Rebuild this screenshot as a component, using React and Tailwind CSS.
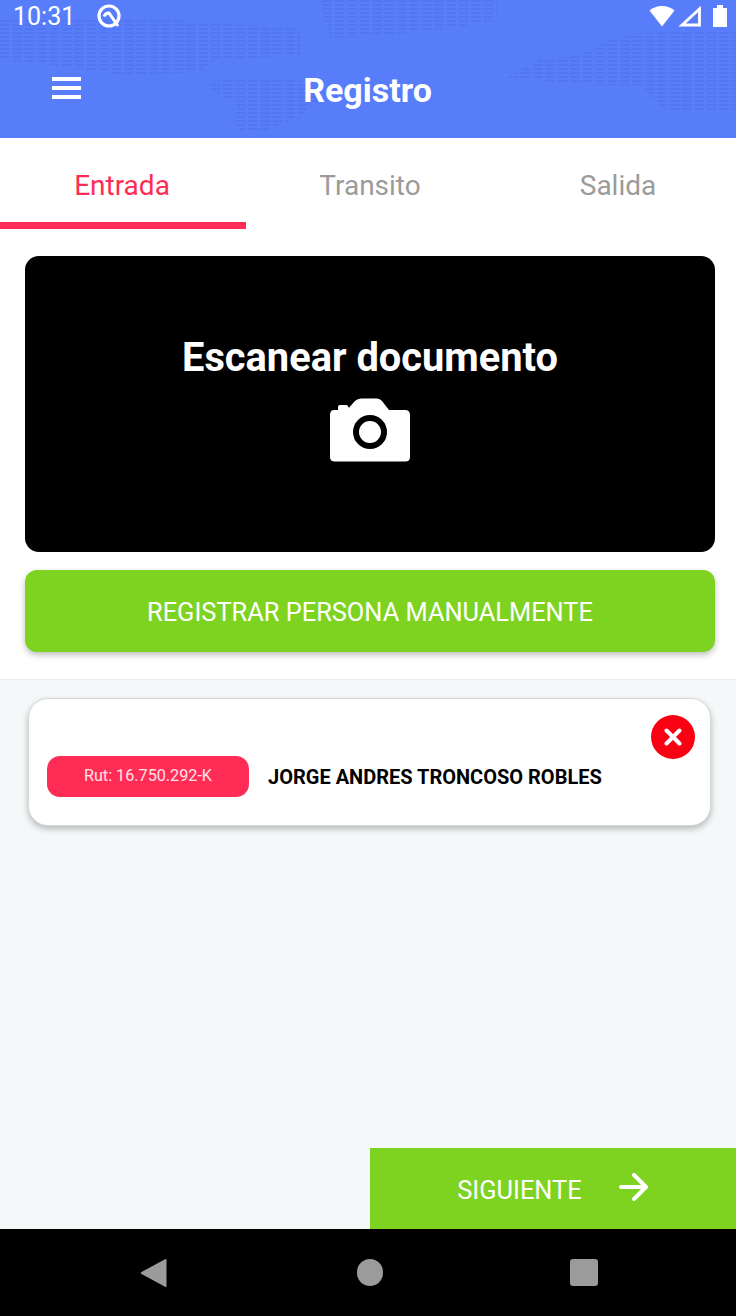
import React from "react";

const mapBlobs = [
  "M0 18 L140 18 L230 24 L300 28 L300 55 L215 60 L200 72 L125 75 L30 62 L0 60 Z",
  "M203 87 L227 78 L300 80 L327 93 L300 117 L267 130 L240 130 L230 120 L240 107 L217 93 Z",
  "M320 0 L497 0 L497 20 L450 28 L385 35 L330 38 Z",
  "M505 78 L540 60 L580 55 L610 40 L640 33 L736 30 L736 110 L665 110 L640 85 L600 85 Z",
];

function StatusBar() {
  return (
    <div className="relative flex h-[36px] items-center justify-between pb-[3px] pl-[13px] pr-[8px] text-white">
      <div className="flex items-center gap-[21px]">
        <span className="text-[25px] leading-none font-normal">10:31</span>
        <svg width="26" height="26" viewBox="0 0 26 26" fill="none" stroke="white" strokeWidth="3.2" className="-mt-[1px]">
          <circle cx="13" cy="13" r="10" />
          <path d="M8 13.5 Q9.5 10 13 10 L22 23" strokeWidth="3" />
        </svg>
      </div>
      <div className="mb-[2px] flex items-center">
        <svg width="26" height="22" viewBox="0 0 26 22" fill="white">
          <path d="M13 21.5 L0.5 5.5 C4 2.5 8 1 13 1 C18 1 22 2.5 25.5 5.5 Z" />
        </svg>
        <svg width="24" height="22" viewBox="0 0 24 22" fill="none" stroke="white" strokeWidth="2.8" className="ml-[3px]">
          <path d="M21.5 4 L21.5 20 L4 20 Z" />
        </svg>
        <svg width="16" height="23" viewBox="0 0 16 23" fill="white" className="ml-[10px]">
          <path d="M1 4 L5 4 L5 1 L11 1 L11 4 L15 4 L15 23 L1 23 Z" />
        </svg>
      </div>
    </div>
  );
}

function Header() {
  return (
    <div className="relative h-[138px] shrink-0 overflow-hidden bg-[#587dfb]">
      {/* dotted world map behind the header */}
      <svg className="absolute inset-0" width="736" height="138">
        <defs>
          <pattern id="dots" width="12.4" height="4" patternUnits="userSpaceOnUse">
            <rect x="0" y="0" width="9.5" height="2" fill="#4a6de4" />
          </pattern>
        </defs>
        {mapBlobs.map((d, i) => (
          <path key={i} d={d} fill="url(#dots)" opacity="0.45" />
        ))}
      </svg>
      <StatusBar />
      <div className="relative flex h-[102px] items-start">
        <div className="ml-[52px] mt-[41px] flex w-[29px] flex-col gap-[5px]">
          <div className="h-[4px] bg-white" />
          <div className="h-[4px] bg-white" />
          <div className="h-[4px] bg-white" />
        </div>
        <div className="absolute left-0 right-0 top-[34px] pr-[1px] text-center text-[34px] leading-[40px] font-bold text-white">
          Registro
        </div>
      </div>
    </div>
  );
}

function Tabs() {
  return (
    <div className="flex h-[91px] shrink-0 bg-white shadow-[0_1px_2px_rgba(0,0,0,0.12)]">
      <div className="w-[246px] border-b-[7px] border-[#ff2d55] pr-[2px] pt-[30px] text-center text-[28px] leading-[36px] text-[#ff2d55]">
        Entrada
      </div>
      <div className="w-[248px] pt-[30px] text-center text-[28px] leading-[36px] text-[#9b9b9b]">Transito</div>
      <div className="w-[242px] pl-[6px] pt-[30px] text-center text-[28px] leading-[36px] text-[#9b9b9b]">Salida</div>
    </div>
  );
}

function CameraIcon() {
  return (
    <svg width="80" height="64" viewBox="0 0 80 64" fill="white">
      <path d="M4 12 L8 12 L8 9 Q8 7 10 7 L16 7 Q18 7 18.5 9 L19 10 L20 8.5 L25 3 Q27.5 0.5 31 0.5 L47 0.5 Q50 0.5 52 3 L59 12 L75 12 Q80 12 80 17 L80 59 Q80 63.5 75 63.5 L5 63.5 Q0 63.5 0 59 L0 17 Q0 12 4 12 Z" />
      <circle cx="40" cy="34" r="14" fill="none" stroke="black" strokeWidth="6" />
    </svg>
  );
}

function Scanner() {
  return (
    <div className="flex h-[296px] flex-col items-center rounded-[14px] bg-black pt-[79px]">
      <div className="text-[39.8px] leading-[46px] font-bold text-white">Escanear documento</div>
      <div className="mt-[17px]">
        <CameraIcon />
      </div>
    </div>
  );
}

function PersonCard() {
  return (
    <div className="relative ml-[28px] mr-[25px] mt-[18px] flex h-[128px] items-center rounded-[20px] border border-[#d8d8d8] bg-white pl-[18px] pt-[28px] shadow-[0_3px_6px_rgba(0,0,0,0.25)]">
      <div className="flex h-[41px] w-[202px] items-center justify-center rounded-[13px] bg-[#ff2d55] text-[16.2px] text-[#ffe3e8]">
        Rut: 16.750.292-K
      </div>
      <div className="ml-[19px] pt-[2px] text-[20px] leading-none font-bold text-black">JORGE ANDRES TRONCOSO ROBLES</div>
      <div className="absolute right-[15px] top-[16px] flex h-[44px] w-[44px] items-center justify-center rounded-full bg-[#f90012]">
        <svg width="18" height="18" viewBox="0 0 18 18" stroke="white" strokeWidth="4" strokeLinecap="round">
          <path d="M2.5 2.5 L15.5 15.5 M15.5 2.5 L2.5 15.5" />
        </svg>
      </div>
    </div>
  );
}

function NavBar() {
  return (
    <div className="flex h-[87px] shrink-0 items-center bg-black pl-[140px]">
      <svg width="27" height="30" viewBox="0 0 27 30" fill="#9b9b9b">
        <path d="M25.5 1 Q26.5 0.5 26.5 2 L26.5 28 Q26.5 29.5 25.5 29 L1.5 16 Q0 15 1.5 14 Z" />
      </svg>
      <div className="ml-[190px] h-[27px] w-[26px] rounded-full bg-[#9b9b9b]" />
      <div className="ml-[187px] h-[27px] w-[28px] rounded-[3px] bg-[#9b9b9b]" />
    </div>
  );
}

export default function App() {
  return (
    <div className="flex h-[1316px] w-[736px] flex-col overflow-hidden bg-[#f5f8f9] font-['Roboto',sans-serif]">
      <Header />
      <Tabs />
      <div className="shrink-0 border-b border-[#e9edef] bg-white pb-[27px] pl-[25px] pr-[21px] pt-[27px]">
        <Scanner />
        <button className="mt-[18px] flex h-[82px] w-full items-center justify-center rounded-[12px] bg-[#7ed321] pt-[3px] text-[25.4px] text-white shadow-[0_3px_6px_rgba(0,0,0,0.25)]">
          REGISTRAR PERSONA MANUALMENTE
        </button>
      </div>
      <PersonCard />
      <div className="flex flex-1 items-end justify-end">
        <button className="flex h-[81px] w-[366px] items-center justify-center gap-[37px] bg-[#7ed321] pt-[3px] text-[25.4px] text-white">
          <span>SIGUIENTE</span>
          <svg width="30" height="28" viewBox="0 0 30 28" fill="none" stroke="white" strokeWidth="4" strokeLinecap="round" strokeLinejoin="round" className="-mt-[6px]">
            <path d="M2 14 L27 14 M15 2 L27 14 L15 26" />
          </svg>
        </button>
      </div>
      <NavBar />
    </div>
  );
}
